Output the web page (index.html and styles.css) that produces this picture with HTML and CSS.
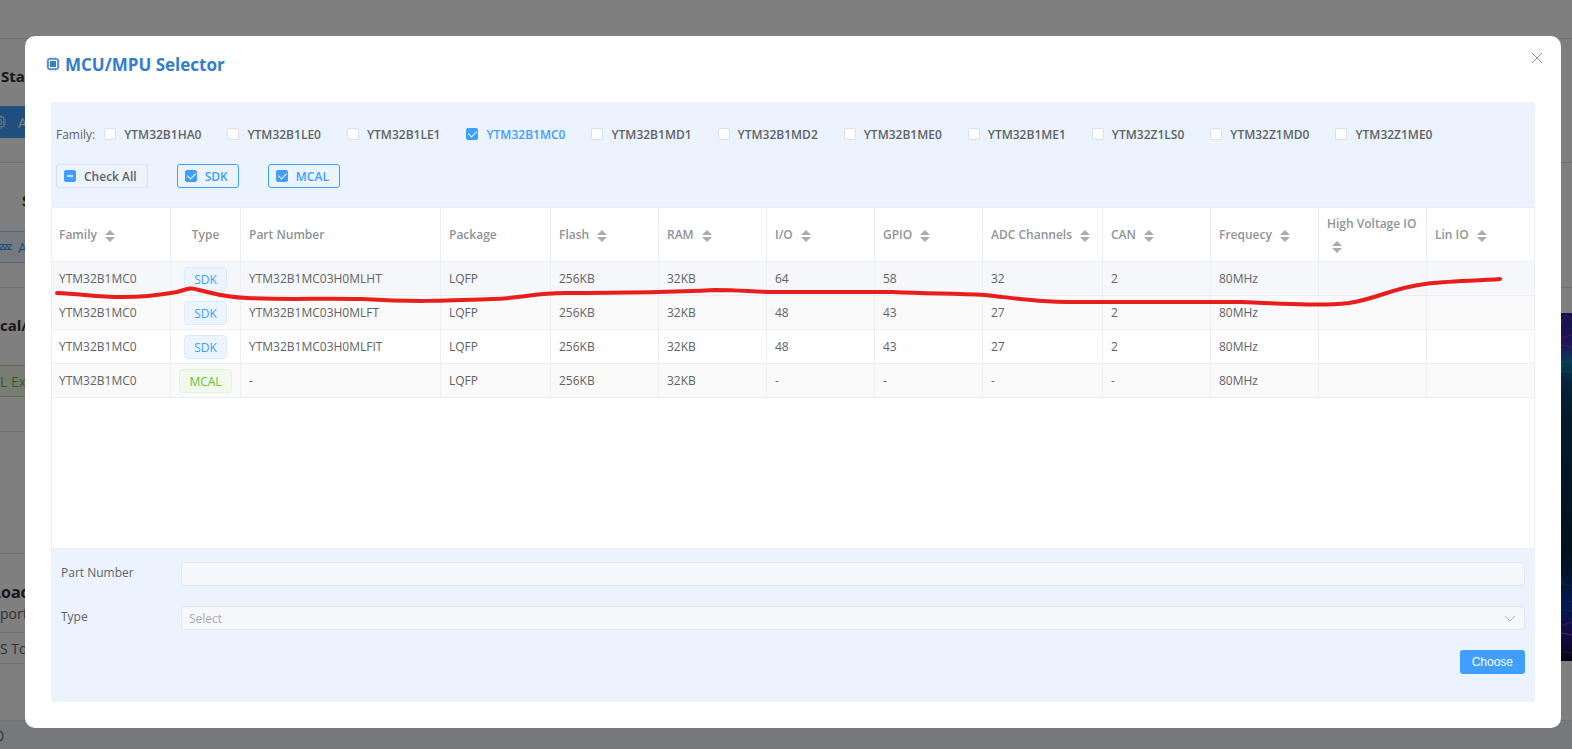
FILE: index.html
```html
<!DOCTYPE html>
<html lang="en">
	<head>
		<meta charset="UTF-8">
		<title>MCU/MPU Selector</title>
		<link rel="stylesheet" href="styles.css">
	</head>
	<body>
		<div id="page">
			<header class="topbar"></header>
			<section class="row start">
				<h3>Sta</h3>
				<button class="btn solid">
					<svg width="14" height="14" viewBox="0 0 16 16" fill="none" stroke="currentColor"><rect x="2.500" y="2.500" width="11" height="11"/><rect x="5.500" y="5.500" width="5" height="5"/><path d="M5.500 0v2M8 0v2M10.500 0v2M5.500 14v2M8 14v2M10.500 14v2M0 5.500h2M0 8h2M0 10.500h2M14 5.500h2M14 8h2M14 10.500h2"/></svg>
					<span>A</span>
				</button>
			</section>
			<section class="row board">
				<h3>S</h3>
				<button class="btn plain">
					<svg width="14" height="8" viewBox="0 0 14 8" fill="none" stroke="currentColor"><path d="M0 1.500h14M0 6.500h14M1 2l2 4 2-4 2 4 2-4 2 4 2-4"/></svg>
					<span>A</span>
				</button>
			</section>
			<section class="row local">
				<h3>cal/S</h3>
				<button class="btn green">L Ex</button>
			</section>
			<section class="row blank"></section>
			<section class="row load">
				<h3>Load</h3>
				<p>port</p>
				<button class="btn gray">S To</button>
			</section>
			<footer>0</footer>
			<div class="banner">
				<svg width="11" height="348" viewBox="0 0 11 348" fill="none">
					<path d="M0 10l5-8 6 5M0 25l11-3M0 32l11 2" stroke="#8c3a9a"/>
					<path d="M0 58l2-9 9-1M0 58l11 1" stroke="#1f8a8a"/>
					<path d="M0 262l2 9 9 2M0 292l11-4M0 296l11 2" stroke="#31408c"/>
					<path d="M0 313l11-4" stroke="#7a3a9a"/>
					<path d="M0 320l11 2" stroke="#c0409a"/>
					<path d="M0 338l11 2" stroke="#4a2470"/>
				</svg>
			</div>
		</div>

		<div id="mask">
			<div class="dialog" role="dialog" aria-labelledby="title">
				<div class="head">
					<svg width="14" height="14" viewBox="0 0 14 14" fill="none" stroke="currentColor"><rect x="2" y="2" width="10" height="10" rx="1" stroke-width="1.500"/><rect x="4" y="4" width="6" height="6" fill="currentColor" stroke="none"/><path d="M4.500 .5v1M7 .5v1M9.500 .5v1M4.500 12.500v1M7 12.500v1M9.500 12.500v1M.5 4.500h1M.5 7h1M.5 9.500h1M12.500 4.500h1M12.500 7h1M12.500 9.500h1"/></svg>
					<h2 id="title">MCU/MPU Selector</h2>
					<button class="close" aria-label="Close">
						<svg width="12" height="12" viewBox="0 0 12 12" stroke="currentColor"><path d="M1 1l10 10M11 1L1 11"/></svg>
					</button>
				</div>

				<div class="panel">
					<div class="filter">
						<div class="family">
							<span class="name">Family:</span>
							<label><input type="checkbox">YTM32B1HA0</label>
							<label><input type="checkbox">YTM32B1LE0</label>
							<label><input type="checkbox">YTM32B1LE1</label>
							<label class="on"><input type="checkbox" checked>YTM32B1MC0</label>
							<label><input type="checkbox">YTM32B1MD1</label>
							<label><input type="checkbox">YTM32B1MD2</label>
							<label><input type="checkbox">YTM32B1ME0</label>
							<label><input type="checkbox">YTM32B1ME1</label>
							<label><input type="checkbox">YTM32Z1LS0</label>
							<label><input type="checkbox">YTM32Z1MD0</label>
							<label><input type="checkbox">YTM32Z1ME0</label>
						</div>
						<div class="types">
							<label><input type="checkbox" class="half">Check All</label>
							<label class="on"><input type="checkbox" checked>SDK</label>
							<label class="on"><input type="checkbox" checked>MCAL</label>
						</div>
					</div>

					<div class="list">
						<table>
							<colgroup>
								<col class="w119"><col class="w70"><col class="w200"><col class="w110">
								<col class="w108"><col class="w108"><col class="w108"><col class="w108">
								<col class="w120"><col class="w108"><col class="w108"><col class="w108"><col>
							</colgroup>
							<thead>
								<tr>
									<th>Family <i class="sort"></i></th>
									<th class="center">Type</th>
									<th>Part Number</th>
									<th>Package</th>
									<th>Flash <i class="sort"></i></th>
									<th>RAM <i class="sort"></i></th>
									<th>I/O <i class="sort"></i></th>
									<th>GPIO <i class="sort"></i></th>
									<th>ADC Channels <i class="sort"></i></th>
									<th>CAN <i class="sort"></i></th>
									<th>Frequecy <i class="sort"></i></th>
									<th>High Voltage IO <i class="sort"></i></th>
									<th>Lin IO <i class="sort"></i></th>
								</tr>
							</thead>
							<tbody>
								<tr class="hover">
									<td>YTM32B1MC0</td>
									<td class="center"><span class="tag">SDK</span></td>
									<td>YTM32B1MC03H0MLHT</td>
									<td>LQFP</td>
									<td>256KB</td>
									<td>32KB</td>
									<td>64</td>
									<td>58</td>
									<td>32</td>
									<td>2</td>
									<td>80MHz</td>
									<td></td>
									<td></td>
								</tr>
								<tr>
									<td>YTM32B1MC0</td>
									<td class="center"><span class="tag">SDK</span></td>
									<td>YTM32B1MC03H0MLFT</td>
									<td>LQFP</td>
									<td>256KB</td>
									<td>32KB</td>
									<td>48</td>
									<td>43</td>
									<td>27</td>
									<td>2</td>
									<td>80MHz</td>
									<td></td>
									<td></td>
								</tr>
								<tr>
									<td>YTM32B1MC0</td>
									<td class="center"><span class="tag">SDK</span></td>
									<td>YTM32B1MC03H0MLFIT</td>
									<td>LQFP</td>
									<td>256KB</td>
									<td>32KB</td>
									<td>48</td>
									<td>43</td>
									<td>27</td>
									<td>2</td>
									<td>80MHz</td>
									<td></td>
									<td></td>
								</tr>
								<tr>
									<td>YTM32B1MC0</td>
									<td class="center"><span class="tag green">MCAL</span></td>
									<td>-</td>
									<td>LQFP</td>
									<td>256KB</td>
									<td>32KB</td>
									<td>-</td>
									<td>-</td>
									<td>-</td>
									<td>-</td>
									<td>80MHz</td>
									<td></td>
									<td></td>
								</tr>
							</tbody>
						</table>
						<!-- hand drawn marker under the first row -->
						<svg class="marker" viewBox="0 0 1482 50" preserveAspectRatio="none" fill="none" stroke="#e81e1c" stroke-width="4" stroke-linecap="round" stroke-linejoin="round"><path d="M5 23C30 24 45 27 70 27C100 27 113 24 125 22C136 19 137 17 147 20C165 24 170 27 195 28C240 30 265 28 310 29C360 32 390 31 440 29C475 28 480 23 513 23C580 23 625 22 663 20C690 20 700 22 720 22L840 22C880 24 900 23 933 25C970 29 985 32 1025 32L1190 32C1235 34 1270 36 1297 33C1325 29 1340 18 1373 14C1395 11 1425 11 1448 9"/></svg>
					</div>

					<form class="form">
						<div class="item">
							<label for="part">Part Number</label>
							<input id="part" type="text" disabled>
						</div>
						<div class="item">
							<label for="type">Type</label>
							<div class="select">
								<select id="type" disabled><option>Select</option></select>
								<svg width="12" height="8" viewBox="0 0 12 8" fill="none" stroke="currentColor"><path d="M1 1l5 5 5-5"/></svg>
							</div>
						</div>
						<button type="button" class="choose">Choose</button>
					</form>
				</div>
			</div>
		</div>
	</body>
</html>
```
FILE: styles.css
```css
*{
	box-sizing:border-box;
	margin:0;
	padding:0;
}
body{
	font-family:"Open Sans", "Noto Sans", sans-serif;
	font-size:12px;
	color:#606266;
	overflow:hidden;
}
button, input, select{
	font-family:inherit;
}

/* page behind the dialog */
#page{
	position:relative;
	min-height:100vh;
	display:flex;
	flex-direction:column;
	overflow:hidden;
	background:white;
}
.topbar{
	height:39px;
	border-bottom:1px solid #dcdfe6;
}
.row{
	width:100%;
	display:flex;
	flex-direction:column;
	align-items:flex-start;
	border-bottom:1px solid #dcdfe6;
}
.row h3{
	font-size:15px;
	line-height:24px;
	color:#303133;
	white-space:nowrap;
}
.btn{
	width:60px;
	height:32px;
	display:flex;
	align-items:center;
	gap:12px;
	font-size:14px;
	border:1px solid;
	border-left:none;
	white-space:nowrap;
}
.btn svg{
	flex:none;
}
.start{
	height:124px;
	padding-top:25px;
}
.start h3{
	padding-left:1px;
}
.start .btn{
	margin-top:18px;
	margin-left:-8px;
	background:#409eff;
	border-color:#409eff;
	color:white;
}
.board{
	height:125px;
	padding-top:25px;
}
.board h3{
	padding-left:22px;
}
.board .btn{
	margin-top:19px;
	margin-left:-2px;
	background:#ecf5ff;
	border-color:#a0cfff;
	color:#409eff;
	gap:6px;
}
.local{
	height:144px;
	padding-top:25px;
}
.local .btn{
	margin-top:28px;
	background:#f0f9eb;
	border-color:#b3e19d;
	color:#67c23a;
}
.blank{
	height:122px;
}
.load{
	flex:1;
	padding-top:26px;
	border-bottom:none;
}
.load h3{
	margin-left:-8px;
	font-size:16px;
}
.load p{
	font-size:14px;
	line-height:20px;
}
.load .btn{
	margin-top:8px;
	background:white;
	border-color:#dcdfe6;
	color:#606266;
}
#page footer{
	height:29px;
	margin-left:-4px;
	font-size:14px;
	line-height:30px;
	background:#ecf0f8;
	border-top:1px solid #dcdfe6;
}
.banner{
	position:absolute;
	right:0;
	top:313px;
	width:11px;
	height:348px;
	background:linear-gradient(#2a2090, #3a2ab0 9%, #0f78b0 14%, #0a4878 20%, #083658 28%, #062a48 55%, #042438 68%, #062a60 76%, #0634a0 84%, #2a1490 92%, #0a0a28);
}

/* dialog */
#mask{
	position:fixed;
	top:0;
	right:0;
	bottom:0;
	left:0;
	padding:36px 11px 21px 25px;
	background:rgba(0,0,0,0.5);
	overflow:hidden;
}
.dialog{
	position:relative;
	padding:16px 26px 26px;
	background:white;
	border-radius:10px;
}
.head{
	display:flex;
	align-items:center;
	gap:5px;
	height:24px;
	margin-left:-5px;
	margin-bottom:26px;
	color:#337ecc;
}
.head h2{
	font-size:17px;
	font-weight:700;
}
.close{
	position:absolute;
	top:16px;
	right:18px;
	width:12px;
	height:12px;
	border:none;
	background:none;
	color:#909399;
	cursor:pointer;
}
.close svg{
	display:block;
}
.panel{
	background:#ebf3ff;
	border-radius:4px;
	overflow:hidden;
}
.filter{
	padding:20px 5px 19px;
}
.family,
.types{
	display:flex;
	align-items:center;
	height:24px;
	gap:26px;
	white-space:nowrap;
}
.types{
	gap:29px;
	margin-top:18px;
}
.family .name{
	margin-right:-17px;
}
.filter label{
	display:flex;
	align-items:center;
	gap:8px;
	font-weight:600;
	cursor:pointer;
}
.filter label.on{
	color:#409eff;
}
.types label{
	height:24px;
	padding:0 10px 0 7px;
	border:1px solid #dcdfe6;
	border-radius:3px;
}
.types label.on{
	border-color:#409eff;
}
.filter input{
	appearance:none;
	position:relative;
	width:12px;
	height:12px;
	background:white;
	border:1px solid #dcdfe6;
	border-radius:2px;
}
.filter input:checked,
.filter input.half{
	background:#409eff;
	border-color:#409eff;
}
.filter input:checked:after{
	content:"";
	position:absolute;
	left:3px;
	top:0;
	width:4px;
	height:7px;
	border:solid white;
	border-width:0 1px 1px 0;
	transform:rotate(45deg);
}
.filter input.half:after{
	content:"";
	position:absolute;
	left:2px;
	top:4px;
	width:6px;
	height:2px;
	background:#c6e2ff;
}

.list{
	position:relative;
	min-height:342px;
	background:white;
	border:1px solid #ebeef5;
}
table{
	width:100%;
	table-layout:fixed;
	border-collapse:separate;
	border-spacing:0;
}
col.w70{
	width:70px;
}
col.w108{
	width:108px;
}
col.w110{
	width:110px;
}
col.w119{
	width:119px;
}
col.w120{
	width:120px;
}
col.w200{
	width:200px;
}
th, td{
	padding:0 8px;
	text-align:left;
	border-right:1px solid #ebeef5;
	border-bottom:1px solid #ebeef5;
}
th:first-child,
td:first-child{
	padding-left:7px;
}
th:last-child,
td:last-child{
	border-right:none;
}
th{
	height:54px;
	line-height:23px;
	font-weight:600;
	color:#909399;
}
td{
	height:34px;
	white-space:nowrap;
}
th.center,
td.center{
	text-align:center;
	padding:0;
}
tbody tr:nth-child(even){
	background:#fafafa;
}
tbody tr.hover{
	background:#f5f7fa;
}
.sort{
	display:inline-block;
	position:relative;
	width:16px;
	height:14px;
	vertical-align:middle;
}
.sort:before,
.sort:after{
	content:"";
	position:absolute;
	left:5px;
	border:5px solid transparent;
}
.sort:before{
	top:-4px;
	border-bottom-color:#a8abb2;
}
.sort:after{
	top:8px;
	border-top-color:#a8abb2;
}
.tag{
	display:inline-block;
	height:24px;
	padding:0 9px;
	line-height:23px;
	vertical-align:middle;
	background:#ecf5ff;
	border:1px solid #d9ecff;
	border-radius:4px;
	color:#409eff;
}
.tag.green{
	background:#f0f9eb;
	border-color:#e1f3d8;
	color:#67c23a;
}
.marker{
	position:absolute;
	left:0;
	top:62px;
	width:100%;
	height:50px;
	pointer-events:none;
}

.form{
	display:flex;
	flex-direction:column;
	gap:20px;
	padding:13px 10px 28px;
}
.item{
	display:flex;
}
.item>label{
	width:120px;
	line-height:22px;
}
.item>input,
.select{
	flex:1;
	height:24px;
	border:1px solid #e4e7ed;
	border-radius:4px;
	background:#f5f7fa;
}
.select{
	position:relative;
}
.select select{
	display:block;
	width:100%;
	height:22px;
	padding:0 7px;
	appearance:none;
	border:none;
	background:none;
	font-size:12px;
	color:#a8abb2;
	opacity:1;
}
.select svg{
	position:absolute;
	right:8px;
	top:8px;
	color:#a8abb2;
	pointer-events:none;
}
.choose{
	align-self:flex-end;
	height:24px;
	padding:0 12px;
	font-family:"Liberation Sans", Arial, sans-serif;
	font-size:12px;
	color:white;
	background:#409eff;
	border:none;
	border-radius:3px;
	cursor:pointer;
}
```
